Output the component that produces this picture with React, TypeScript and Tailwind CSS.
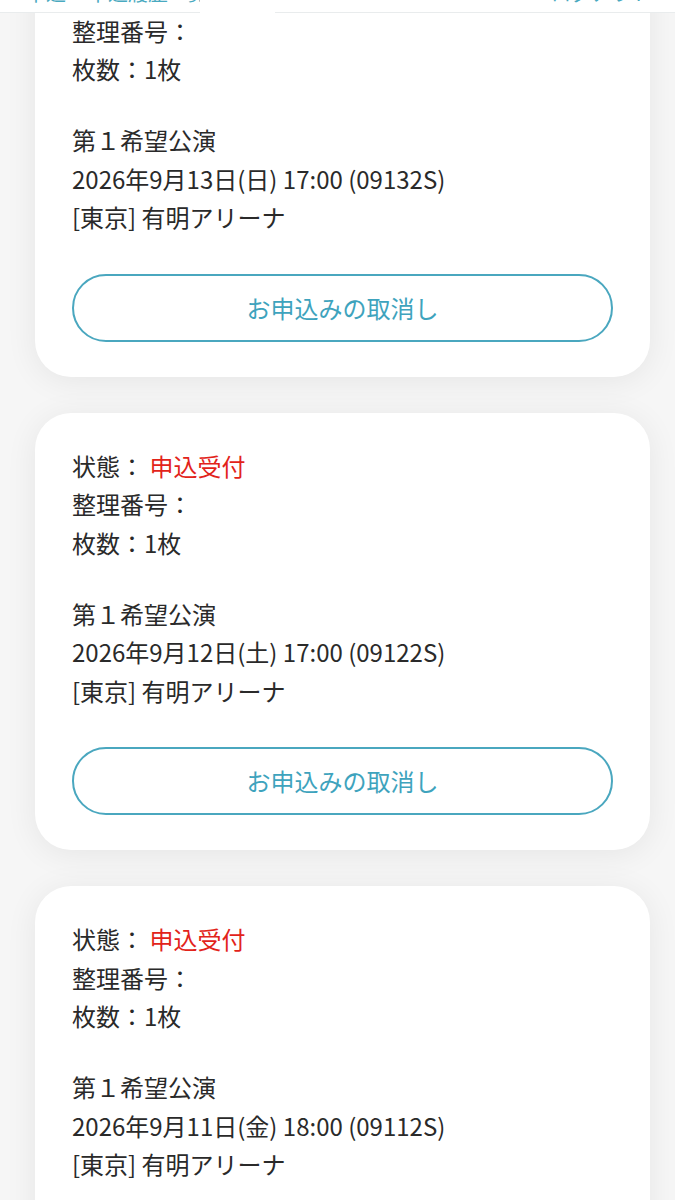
import React from "react";

type Entry = { date: string };

const entries: Entry[] = [
  { date: "2026年9月13日(日) 17:00 (09132S)" },
  { date: "2026年9月12日(土) 17:00 (09122S)" },
  { date: "2026年9月11日(金) 18:00 (09112S)" },
];

function Card({ e }: { e: Entry }) {
  return (
    <div className="ml-[35px] mr-[25px] rounded-[36px] bg-white px-[37px] pt-[34px] pb-[35px] shadow-[0_4px_32px_rgba(0,0,0,0.07)]">
      <div className="text-[24px] leading-[38.5px] text-[#2a2a2a]">
        <div>
          状態： <span className="text-[#e2231a]">申込受付</span>
        </div>
        <div>整理番号：</div>
        <div>枚数：1枚</div>
      </div>
      <div className="mt-[32.5px] text-[24px] leading-[38.5px] text-[#2a2a2a]">
        <div>第１希望公演</div>
        <div>{e.date}</div>
        <div>[東京] 有明アリーナ</div>
      </div>
      <div className="mt-[37px] flex h-[68px] items-center justify-center rounded-full border-2 border-[#4aa7bf] bg-white text-[24px] text-[#3ea3bd]">
        お申込みの取消し
      </div>
    </div>
  );
}

export default function App() {
  return (
    <div
      className="relative h-[1200px] w-[675px] overflow-hidden bg-[#f6f6f6]"
      style={{ fontFamily: '"Noto Sans CJK JP", "Noto Sans", sans-serif' }}
    >
      <div className="mt-[-61px] flex flex-col gap-[36px]">
        {entries.map((e, i) => (
          <Card key={i} e={e} />
        ))}
      </div>
      <div className="absolute left-0 top-0 h-[13px] w-full overflow-hidden border-b border-[#e9eced] bg-white">
        <div className="mt-[-19px] flex items-center justify-between pl-[26px] pr-[24px] text-[20px] leading-[24px] text-[#49a9c0]">
          <div className="flex gap-[22px]">
            <span>申込</span>
            <span>申込履歴一覧</span>
          </div>
          <span>ログアウト</span>
        </div>
      </div>
      <div className="absolute left-[200px] top-0 h-[16px] w-[75px] bg-white" />
    </div>
  );
}
